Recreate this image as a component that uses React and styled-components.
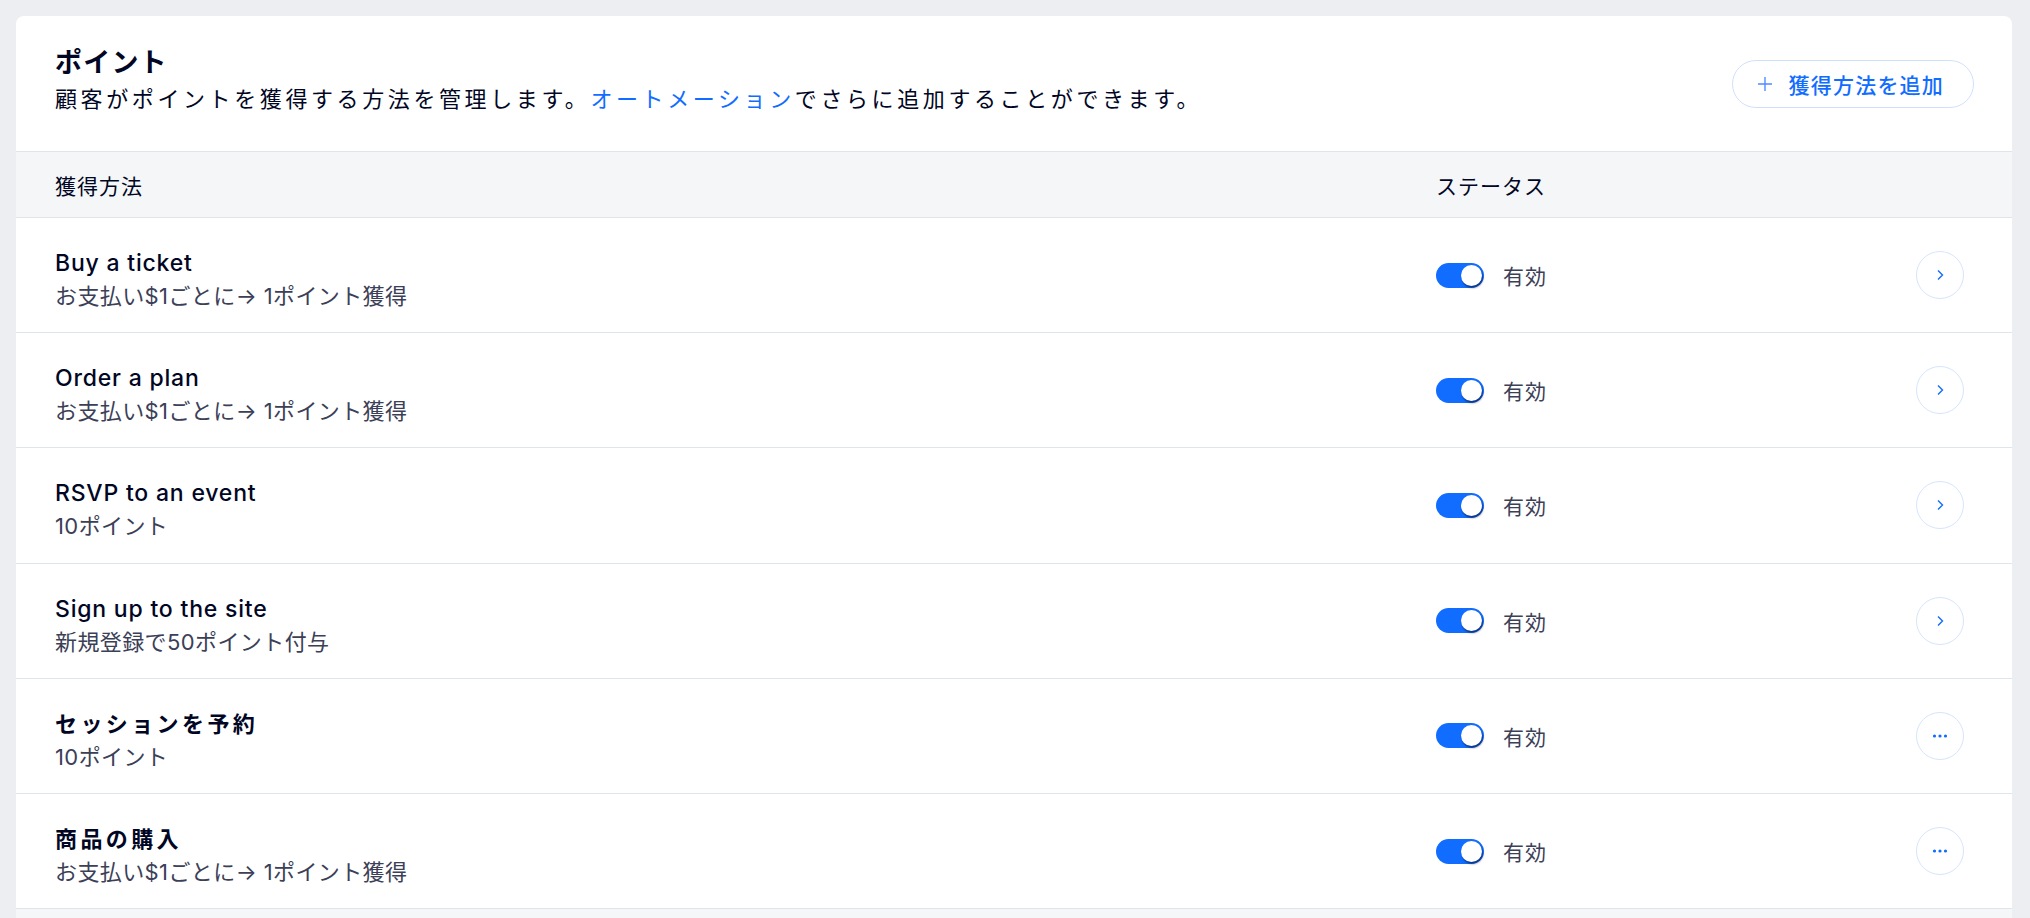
import React from "react";
import styled, { createGlobalStyle } from "styled-components";

const rows = [
  { name: "Buy a ticket", note: "お支払い$1ごとに→ 1ポイント獲得", action: "open" },
  { name: "Order a plan", note: "お支払い$1ごとに→ 1ポイント獲得", action: "open" },
  { name: "RSVP to an event", note: "10ポイント", action: "open" },
  { name: "Sign up to the site", note: "新規登録で50ポイント付与", action: "open" },
  { name: "セッションを予約", note: "10ポイント", action: "more", cjk: true },
  { name: "商品の購入", note: "お支払い$1ごとに→ 1ポイント獲得", action: "more", cjk: true },
];

const App = () => {
  return (
    <>
      <GlobalStyle />
      <Page>
        <Card>
          <CardHeader>
            <HeaderText>
              <Title>ポイント</Title>
              <Subtitle>
                顧客がポイントを獲得する方法を管理します。
                <Link>オートメーション</Link>
                でさらに追加することができます。
              </Subtitle>
            </HeaderText>
            <AddButton>
              <svg width="16" height="16" viewBox="0 0 16 16">
                <path d="M8 1v14M1 8h14" stroke="#4d8dff" strokeWidth="1.4" fill="none" />
              </svg>
              <span>獲得方法を追加</span>
            </AddButton>
          </CardHeader>

          <TableHead>
            <HeadCell>獲得方法</HeadCell>
            <HeadCell>ステータス</HeadCell>
            <span />
          </TableHead>

          {rows.map((row) => (
            <Row key={row.name}>
              <NameBlock>
                <RowTitle $cjk={row.cjk}>{row.name}</RowTitle>
                <RowNote>{row.note}</RowNote>
              </NameBlock>
              <Status>
                <Toggle>
                  <Knob />
                </Toggle>
                <StatusLabel>有効</StatusLabel>
              </Status>
              <RoundButton>
                {row.action === "open" ? (
                  <svg width="10" height="14" viewBox="0 0 10 14">
                    <path d="M3 2.5l4.5 4.5L3 11.5" stroke="#116dff" strokeWidth="1.4" fill="none" />
                  </svg>
                ) : (
                  <svg width="16" height="6" viewBox="0 0 16 6">
                    <circle cx="2.5" cy="3" r="1.6" fill="#116dff" />
                    <circle cx="8" cy="3" r="1.6" fill="#116dff" />
                    <circle cx="13.5" cy="3" r="1.6" fill="#116dff" />
                  </svg>
                )}
              </RoundButton>
            </Row>
          ))}
          <TableTail />
        </Card>
      </Page>
    </>
  );
};

export default App;

const GlobalStyle = createGlobalStyle`
  body {
    margin: 0;
    background: #eceef1;
    font-family: Inter, "Noto Sans CJK JP", sans-serif;
    color: #000624;
    overflow: hidden;
  }
`;

const Page = styled.div`
  padding: 16px 18px 0 16px;
`;

const Card = styled.section`
  background: #ffffff;
  border-radius: 8px 8px 0 0;
  overflow: hidden;
`;

const CardHeader = styled.header`
  display: flex;
  align-items: center;
  justify-content: space-between;
  padding: 29px 38px 34px 39px;
  border-bottom: 1px solid #dfe5eb;
`;

const HeaderText = styled.div`
  display: flex;
  flex-direction: column;
`;

const Title = styled.h1`
  margin: 0;
  font-size: 27px;
  line-height: 36px;
  font-weight: 700;
  letter-spacing: 1.2px;
  color: #000624;
`;

const Subtitle = styled.p`
  margin: 0;
  font-size: 22px;
  line-height: 36px;
  letter-spacing: 3.6px;
  color: #000624;
`;

const Link = styled.span`
  color: #116dff;
`;

const AddButton = styled.button`
  display: flex;
  align-items: center;
  gap: 16px;
  height: 48px;
  padding: 0 29px 0 24px;
  margin-top: 6px;
  border: 1px solid #cfe0fd;
  border-radius: 24px;
  background: #ffffff;
  font-family: Inter, "Noto Sans CJK JP", sans-serif;
  font-size: 21px;
  font-weight: 500;
  letter-spacing: 1.2px;
  color: #116dff;
`;

const Grid = styled.div`
  display: grid;
  grid-template-columns: 1381px 1fr 48px;
  align-items: center;
  padding: 0 48px 0 39px;
  border-bottom: 1px solid #dfe5eb;
  box-sizing: border-box;
`;

const TableHead = styled(Grid)`
  height: 66px;
  background: #f4f6f7;
`;

const HeadCell = styled.div`
  font-size: 21px;
  letter-spacing: 1px;
  color: #000624;
`;

const Row = styled(Grid)`
  height: 115.2px;
`;

const NameBlock = styled.div`
  display: flex;
  flex-direction: column;
  margin-top: 10px;
`;

const RowTitle = styled.div`
  font-size: ${(p) => (p.$cjk ? "22px" : "23px")};
  line-height: 33px;
  font-weight: ${(p) => (p.$cjk ? 700 : 500)};
  letter-spacing: ${(p) => (p.$cjk ? "3.4px" : "0.8px")};
  color: #000624;
`;

const RowNote = styled.div`
  font-size: 22px;
  line-height: 33px;
  letter-spacing: 0.4px;
  color: #3b4057;
`;

const Status = styled.div`
  display: flex;
  align-items: center;
  gap: 19px;
`;

const Toggle = styled.div`
  position: relative;
  width: 48px;
  height: 25px;
  border-radius: 13px;
  background: #116dff;
`;

const Knob = styled.div`
  position: absolute;
  top: 2px;
  right: 2px;
  width: 21px;
  height: 21px;
  border-radius: 50%;
  background: #ffffff;
  box-shadow: 1px 2px 2px rgba(0, 6, 36, 0.55);
`;

const StatusLabel = styled.span`
  font-size: 21px;
  letter-spacing: 1px;
  color: #3b4057;
`;

const RoundButton = styled.button`
  display: flex;
  align-items: center;
  justify-content: center;
  width: 48px;
  height: 48px;
  padding: 0;
  border: 1px solid #d6e5fd;
  border-radius: 50%;
  background: #ffffff;
`;

const TableTail = styled.div`
  height: 30px;
  background: #f4f6f7;
`;
